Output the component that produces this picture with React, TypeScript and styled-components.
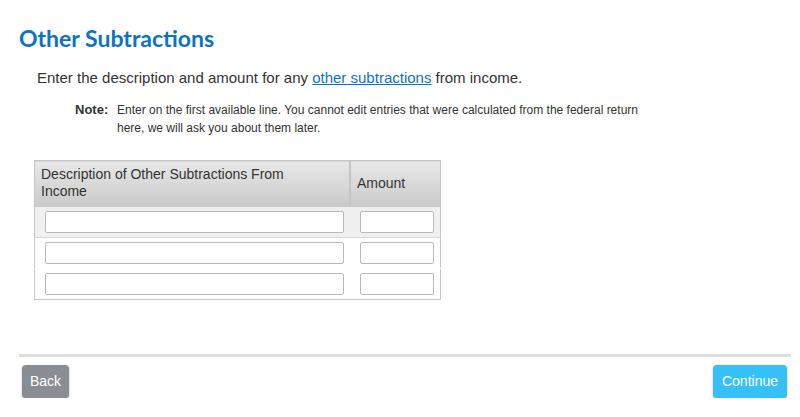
import React from 'react';
import styled, {createGlobalStyle} from 'styled-components';

const GlobalStyle = createGlobalStyle`
  body {
    margin: 0;
    background: #fff;
    font-family: "Liberation Sans", Arial, sans-serif;
    color: #333;
  }
`;

const Page = styled.div`
  width: 772px;
  padding: 24px 0 0 19px;
`;

const Title = styled.h1`
  margin: 0;
  font-family: Lato, "Liberation Sans", sans-serif;
  font-weight: 700;
  font-size: 23px;
  line-height: 28px;
  color: #0e72c2;
`;

const Intro = styled.p`
  margin: 16px 0 0 18px;
  font-size: 15px;
  line-height: 20px;
  color: #333;

  a {
    color: #0e72c2;
    text-decoration: underline;
  }
`;

const Note = styled.div`
  display: flex;
  margin: 13px 0 0 56px;
  width: 570px;
  font-size: 12px;
  line-height: 18px;
`;

const NoteLabel = styled.span`
  font-weight: 700;
  font-size: 13px;
  flex: 0 0 42px;
`;

const Table = styled.table`
  margin: 23px 0 0 15px;
  width: 407px;
  border-collapse: collapse;
  border: 1px solid #c3c6c9;
`;

const HeadCell = styled.th<{$w: number; $wrap?: boolean}>`
  width: ${p => p.$w}px;
  height: 46px;
  padding: 0 ${p => (p.$wrap ? 44 : 6)}px 1px 6px;
  text-align: left;
  vertical-align: middle;
  font-weight: 400;
  font-size: 14px;
  line-height: 17px;
  color: #333;
  background: linear-gradient(#e8e8e8, #c9c9c9);
  border-right: 2px solid #c3c6c9;
  box-sizing: border-box;

  &:last-child {
    border-right: none;
  }
`;

const Row = styled.tr<{$shade?: boolean}>`
  background: ${p => (p.$shade ? '#f0f0f0' : '#fff')};
  border-bottom: 1px solid ${p => (p.$shade ? '#d8d8d8' : '#fff')};

  &:last-child {
    border-bottom: none;
  }
`;

const Cell = styled.td`
  padding: 4px 6px 4px 10px;
  height: 22px;
`;

const Field = styled.input<{$w: number}>`
  display: block;
  width: ${p => p.$w}px;
  height: 22px;
  box-sizing: border-box;
  border: 1px solid #b9b9b9;
  border-radius: 2px;
  background: #fff;
  margin-left: auto;
`;

const Footer = styled.div`
  margin-top: 54px;
  border-top: 3px solid #dedede;
  padding: 8px 4px 0 3px;
  display: flex;
  justify-content: space-between;
`;

const Button = styled.button<{$primary?: boolean}>`
  height: 33px;
  padding: 0 ${p => (p.$primary ? 9 : 8)}px;
  border: none;
  border-radius: 4px;
  font-family: "Liberation Sans", Arial, sans-serif;
  font-size: 14px;
  color: #fff;
  background: ${p => (p.$primary ? '#36c0f8' : '#8a8d94')};
  box-shadow: 0 1px 2px rgba(0, 0, 0, 0.35);
`;

const rows = [true, false, false];

export default function App() {
  return (
    <Page>
      <GlobalStyle/>
      <Title>Other Subtractions</Title>
      <Intro>
        Enter the description and amount for any <a href="#">other subtractions</a> from income.
      </Intro>
      <Note>
        <NoteLabel>Note:</NoteLabel>
        <span>
          Enter on the first available line. You cannot edit entries that were calculated from the federal return
          here, we will ask you about them later.
        </span>
      </Note>
      <Table>
        <thead>
          <tr>
            <HeadCell $w={316} $wrap>Description of Other Subtractions From Income</HeadCell>
            <HeadCell $w={91}>Amount</HeadCell>
          </tr>
        </thead>
        <tbody>
          {rows.map((shade, idx) =>
            <Row key={idx} $shade={shade}>
              <Cell><Field $w={299}/></Cell>
              <Cell><Field $w={74}/></Cell>
            </Row>)}
        </tbody>
      </Table>
      <Footer>
        <Button>Back</Button>
        <Button $primary>Continue</Button>
      </Footer>
    </Page>
  );
}
